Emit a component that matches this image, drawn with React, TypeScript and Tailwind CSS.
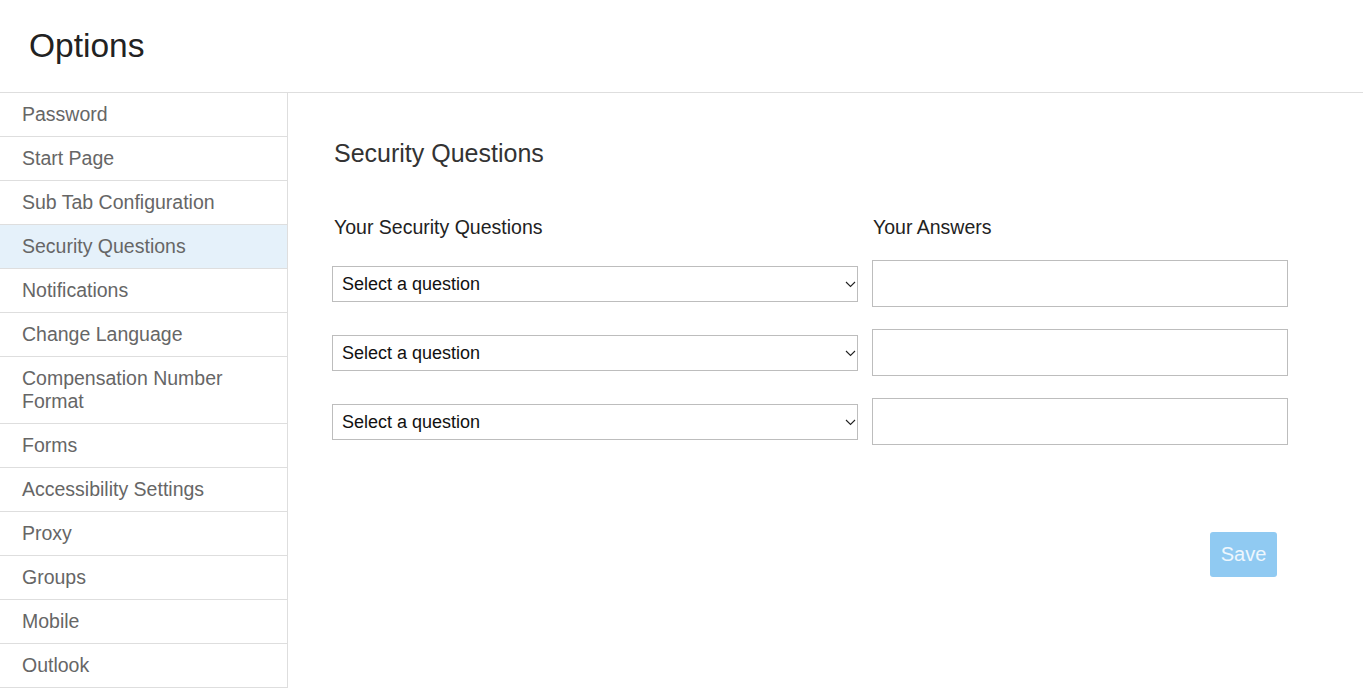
import { useState } from 'react';

const NAV_ITEMS = [
  'Password',
  'Start Page',
  'Sub Tab Configuration',
  'Security Questions',
  'Notifications',
  'Change Language',
  'Compensation Number Format',
  'Forms',
  'Accessibility Settings',
  'Proxy',
  'Groups',
  'Mobile',
  'Outlook',
];

function QuestionSelect() {
  return (
    <div className="relative w-[526px] h-[36px] border border-[#bdbdbd] bg-white">
      <select className="appearance-none w-full h-full bg-transparent pl-[9px] pr-[24px] pt-[1px] text-[18px] text-[#111] outline-none">
        <option>Select a question</option>
      </select>
      <svg className="absolute right-[1px] top-[14px] pointer-events-none" width="11" height="7" viewBox="0 0 11 7">
        <path d="M1 1 L5.5 5.5 L10 1" fill="none" stroke="#222" strokeWidth="1.1" />
      </svg>
    </div>
  );
}

export default function App() {
  const [active, setActive] = useState('Security Questions');

  return (
    <div className="min-h-screen bg-white text-[#333]" style={{ fontFamily: '"Liberation Sans", Arial, sans-serif' }}>
      <header className="h-[93px] flex items-center px-[29px] border-b border-[#dedede]">
        <h1 className="text-[33.5px] text-[#222] leading-none">Options</h1>
      </header>

      <div className="flex">
        <nav className="w-[288px] shrink-0 border-r border-[#dedede]">
          {NAV_ITEMS.map((item) => (
            <div
              key={item}
              onClick={() => setActive(item)}
              className={`pl-[22px] pr-4 py-[10px] leading-[23px] text-[19.5px] text-[#666] border-b border-[#dedede] cursor-pointer ${
                active === item ? 'bg-[#e5f1fa]' : 'bg-white'
              }`}
            >
              {item}
            </div>
          ))}
        </nav>

        <main className="flex-1 pl-[44px] pt-[45px]">
          <div className="w-[956px]">
            <h2 className="pl-[2px] text-[25px] leading-[30px] text-[#333]">Security Questions</h2>

            <div className="flex gap-[14px] mt-[47px] text-[19.5px] leading-[24px] text-[#222]">
              <div className="w-[526px] pl-[2px]">Your Security Questions</div>
              <div className="w-[416px] pl-[1px]">Your Answers</div>
            </div>

            <div className="flex flex-col gap-[22px] mt-[21px]">
              {[0, 1, 2].map((i) => (
                <div key={i} className="flex items-center gap-[14px]">
                  <QuestionSelect />
                  <input type="text" className="w-[416px] h-[47px] border border-[#bdbdbd] px-2 text-[18px] outline-none" />
                </div>
              ))}
            </div>

            <div className="flex justify-end pr-[11px] mt-[87px]">
              <button
                disabled
                className="w-[67px] h-[45px] pb-[1px] rounded-[3px] bg-[#90caf2] text-white/85 text-[20px]"
              >
                Save
              </button>
            </div>
          </div>
        </main>
      </div>
    </div>
  );
}
